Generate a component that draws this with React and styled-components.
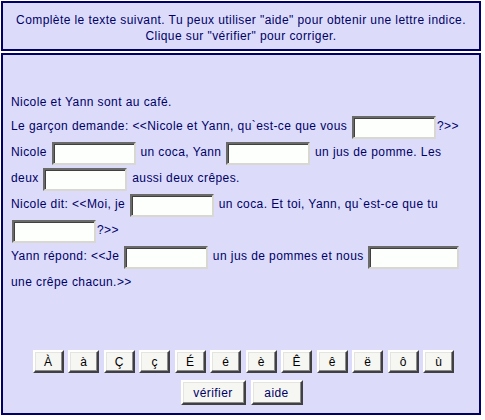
import React from "react";
import styled, { createGlobalStyle } from "styled-components";

const Global = createGlobalStyle`
  html, body { margin: 0; padding: 0; background: #ffffff; }
  body { font-family: "Liberation Sans", Arial, sans-serif; font-size: 12px; color: #000066; }
`;

const Page = styled.div`
  width: 480px;
  padding: 1px 0 0 1px;
  display: flex;
  flex-direction: column;
  gap: 2px;
`;

const Panel = styled.div`
  box-sizing: border-box;
  border: 2px solid #000066;
  background: #dcdcfa;
  height: ${(p) => p.$h}px;
  letter-spacing: 0.42px;
`;

const Instructions = styled(Panel)`
  text-align: center;
  line-height: 16px;
  padding-top: 9px;
`;

const Exercise = styled(Panel)`
  display: flex;
  flex-direction: column;
  padding: 35px 8px 8px 8px;
`;

const Text = styled.div`
  line-height: 24px;
  flex: 1;
`;

const Gap = styled.input.attrs({ type: "text" })`
  box-sizing: border-box;
  width: ${(p) => p.$w || 84}px;
  height: 23px;
  margin: 1.5px 1px;
  padding: 0;
  vertical-align: middle;
  background: #fdfffd;
  border: 2px solid;
  border-color: #6a6a6a #d8d8d0 #d8d8d0 #6a6a6a;
  box-shadow: inset 1px 1px 0 #404040;
  outline: none;
`;

const AccentRow = styled.div`
  display: flex;
  justify-content: center;
  gap: 4.5px;
  padding-left: 5px;
`;

const Btn = styled.button`
  box-sizing: border-box;
  height: ${(p) => p.$h || 23}px;
  width: ${(p) => p.$w}px;
  padding: 0;
  font-family: "Liberation Sans", Arial, sans-serif;
  font-size: 12px;
  letter-spacing: 0.42px;
  color: ${(p) => (p.$ink ? "#000066" : "#000000")};
  background: #f6f6f2;
  border: 2px solid;
  border-color: #ffffff #404040 #404040 #ffffff;
  box-shadow: inset -1px -1px 0 #8c8c8c, inset 1px 1px 0 #e4e4e0;
  cursor: pointer;
`;

const ActionRow = styled.div`
  display: flex;
  justify-content: center;
  gap: 5px;
  margin-top: 7px;
  padding-left: 1px;
`;

const accents = ["À", "à", "Ç", "ç", "É", "é", "è", "Ê", "ê", "ë", "ô", "ù"];

export default function App() {
  return (
    <>
      <Global />
      <Page>
        <Instructions $h={50}>
          Complète le texte suivant. Tu peux utiliser "aide" pour obtenir une lettre indice.
          <br />
          Clique sur "vérifier" pour corriger.
        </Instructions>
        <Exercise $h={362}>
          <Text>
            Nicole et Yann sont au café.
            <br />
            Le garçon demande: &lt;&lt;Nicole et Yann, qu`est-ce que vous <Gap />?&gt;&gt;
            <br />
            Nicole <Gap /> un coca, Yann <Gap /> un jus de pomme. Les deux <Gap /> aussi deux crêpes.
            <br />
            Nicole dit: &lt;&lt;Moi, je <Gap /> un coca. Et toi, Yann, qu`est-ce que tu <Gap />?&gt;&gt;
            <br />
            Yann répond: &lt;&lt;Je <Gap /> un jus de pommes et nous <Gap $w={91} /> une crêpe chacun.&gt;&gt;
          </Text>
          <AccentRow>
            {accents.map((a) => (
              <Btn key={a} $w={31}>{a}</Btn>
            ))}
          </AccentRow>
          <ActionRow>
            <Btn $w={65} $h={25} $ink>vérifier</Btn>
            <Btn $w={52} $h={25} $ink>aide</Btn>
          </ActionRow>
        </Exercise>
      </Page>
    </>
  );
}
